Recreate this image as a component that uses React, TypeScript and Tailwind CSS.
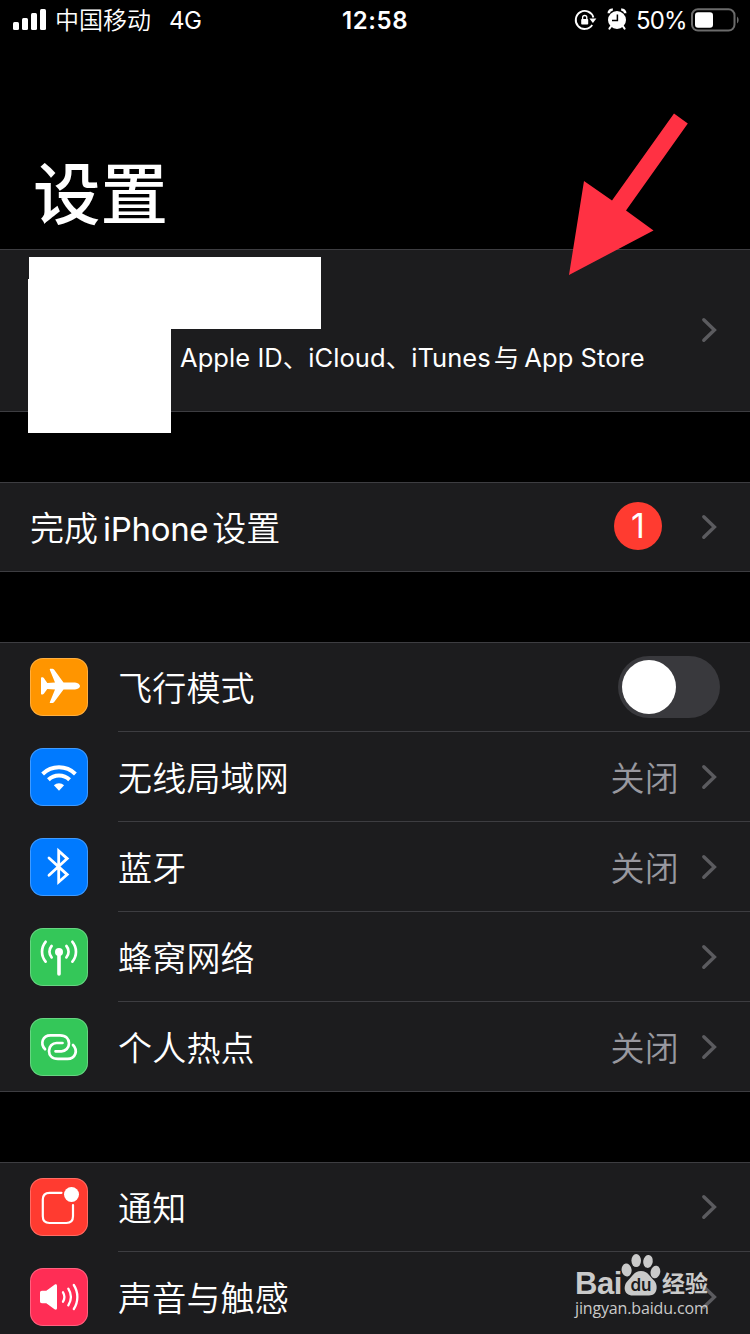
import React from 'react';

const Chevron = () => (
  <svg width="16" height="26" viewBox="0 0 16 26" fill="none" className="shrink-0">
    <path d="M2.8 2.8 L13.4 13 L2.8 23.2" stroke="#5b5b5f" strokeWidth="3.4" strokeLinecap="round" strokeLinejoin="miter" />
  </svg>
);

const StatusBar = () => (
  <header className="flex h-10 items-center text-white">
    <div className="flex w-[342px] items-center pl-[13px]">
      <svg width="34" height="22" viewBox="0 0 34 22" fill="#fff">
        <rect x="0" y="13" width="6" height="8" rx="1.5" />
        <rect x="9" y="9" width="6" height="12" rx="1.5" />
        <rect x="18" y="4" width="6" height="17" rx="1.5" />
        <rect x="27" y="0" width="6" height="21" rx="1.5" />
      </svg>
      <span className="ml-2 pt-0.5 text-[24px] leading-10 font-[350]">中国移动</span>
      <span className="ml-[18px] pt-0.5 text-[24px] leading-10 font-[390] tracking-[-0.4px]">4G</span>
    </div>
    <span className="w-[232px] pt-0.5 text-[24px] leading-10 font-semibold tracking-[0.6px]">12:58</span>
    <svg width="24" height="24" viewBox="0 0 24 24" fill="none" className="shrink-0">
      <path d="M18.2 17 A9 9 0 1 1 19.4 9.4" stroke="#fff" strokeWidth="1.9" />
      <path d="M15.4 10.4 H22.4 L18.9 15 Z" fill="#fff" />
      <rect x="7.2" y="11" width="7" height="5.6" rx="0.8" fill="#fff" />
      <path d="M8.6 11.4 V9.6 a2.1 2.1 0 0 1 4.2 0 V11.4" stroke="#fff" strokeWidth="1.3" />
    </svg>
    <svg width="22" height="24" viewBox="0 0 22 24" fill="none" className="ml-2 shrink-0">
      <circle cx="11" cy="12" r="9" fill="#fff" />
      <path d="M2.8 5.2 A3.4 3.4 0 0 1 6.8 1.8 M15.2 1.8 A3.4 3.4 0 0 1 19.2 5.2" stroke="#fff" strokeWidth="2.6" />
      <path d="M5 18.4 L3.4 20.6 M17 18.4 L18.6 20.6" stroke="#fff" strokeWidth="2" strokeLinecap="round" />
      <path d="M11.4 6.6 V12.6 H6" stroke="#000" strokeWidth="1.5" />
    </svg>
    <span className="ml-[8px] w-[55px] pt-0.5 text-[24px] leading-10 font-[380] tracking-[-0.9px]">50%</span>
    <svg width="50" height="24" viewBox="0 0 50 24" className="shrink-0">
      <rect x="1" y="1.2" width="42.5" height="21.4" rx="6" fill="none" stroke="#6b6b6b" strokeWidth="2" />
      <rect x="4" y="4.2" width="18" height="15.6" rx="3" fill="#fff" />
      <path d="M46 8.5 a4.5 4.5 0 0 1 0 7 Z" fill="#6b6b6b" />
    </svg>
  </header>
);

const PlaneIcon = () => (
  <svg width="58" height="58" viewBox="0 0 58 58" fill="#fff">
    <path d="M33.5 24.4 L45 24.4 C48 24.8 50 26.3 50 28 C50 29.7 48 31 45 31.4 L33.5 31.5 L24.2 44 C23.6 44.8 22.8 45 22 45 H20.4 C19.8 45 19.6 44.6 19.9 43.9 L25 31.5 L17.3 31 L14 35.4 C13.4 36.3 12.9 36.4 12 36.4 C11.3 36.4 11 36 11 35.4 V20.3 C11 19.6 11.4 19.3 12 19.3 C13 19.3 13.5 19.5 14 20.3 L17.3 24.9 L25 24.4 L19.9 12.1 C19.6 11.3 19.8 10.7 20.4 10.7 H22 C22.8 10.7 23.6 11 24.2 11.8 Z" />
  </svg>
);

const WifiIcon = () => (
  <svg width="58" height="58" viewBox="0 0 58 58" fill="none" stroke="#fff" strokeWidth="4">
    <path d="M12.6 26 A23.6 23.6 0 0 1 45.4 26" />
    <path d="M18.4 31.8 A15.4 15.4 0 0 1 39.6 31.8" />
    <path d="M29 42.8 L23.9 37.3 A7.4 7.4 0 0 1 34.1 37.3 Z" fill="#fff" stroke="none" />
  </svg>
);

const BluetoothIcon = () => (
  <svg width="58" height="58" viewBox="0 0 58 58" fill="none" stroke="#fff" strokeWidth="2.8" strokeLinecap="round" strokeLinejoin="miter">
    <path d="M19 20 L37.2 36.6 L28.7 44 V13 L37.2 20.6 L19 37.2" />
  </svg>
);

const CellularIcon = () => (
  <svg width="58" height="58" viewBox="0 0 58 58" fill="none" stroke="#fff" strokeWidth="2.7" strokeLinecap="round">
    <circle cx="29" cy="24" r="4" fill="#fff" stroke="none" />
    <path d="M29 25 V46" strokeWidth="3.6" />
    <path d="M21.6 18 A8.6 8.6 0 0 0 21.6 29.4 M36.4 18 A8.6 8.6 0 0 1 36.4 29.4" />
    <path d="M15.6 13.8 A15.5 15.5 0 0 0 15.6 33.6 M42.4 13.8 A15.5 15.5 0 0 1 42.4 33.6" />
  </svg>
);

const HotspotIcon = () => (
  <svg width="58" height="58" viewBox="0 0 58 58" fill="none" stroke="#fff" strokeWidth="2.7" strokeLinecap="round">
    <path d="M15 31.2 C9.8 25.5 12.6 17.3 20.5 17.3 H30 C36 17.3 39 21 39 25.3 C39 30 35.5 33.3 31.5 33.3 H25.5" />
    <path d="M43 27 C48.3 32.5 45.4 40.9 37.5 40.9 H28 C22 40.9 19 37.2 19 33 C19 28.2 22.5 25 26.5 25 H32.5" />
  </svg>
);

const NotificationIcon = () => (
  <svg width="58" height="58" viewBox="0 0 58 58" fill="none" stroke="#fff" strokeWidth="2.2" strokeLinecap="round">
    <path d="M31.5 14.8 H19.5 Q12.8 14.8 12.8 21.5 V38.3 Q12.8 45 19.5 45 H36.3 Q43 45 43 38.3 V27" />
    <circle cx="41.5" cy="16.5" r="7.5" fill="#fff" stroke="none" />
  </svg>
);

const SoundIcon = () => (
  <svg width="58" height="58" viewBox="0 0 58 58" fill="none" stroke="#fff" strokeWidth="2.3" strokeLinecap="round">
    <path d="M12 22.8 H16.3 L24.5 16.8 C26 15.8 27 16.4 27 18 V40 C27 41.6 26 42.2 24.5 41.2 L16.3 35.2 H12 C10.6 35.2 10 34.5 10 33.2 V24.8 C10 23.5 10.6 22.8 12 22.8 Z" fill="#fff" stroke="none" />
    <path d="M33 24.3 A9 9 0 0 1 33 33.7" />
    <path d="M38.3 20.7 A15.5 15.5 0 0 1 38.3 37.3" />
    <path d="M43.8 17 A22 22 0 0 1 43.8 41" />
  </svg>
);

type RowProps = {
  icon: React.ReactNode;
  color: string;
  label: string;
  value?: string;
  toggle?: boolean;
  last?: boolean;
};

const Row = ({ icon, color, label, value, toggle, last }: RowProps) => (
  <div className="flex h-[90px] pl-[30px]">
    <div className={`mt-4 h-[58px] w-[58px] shrink-0 overflow-hidden rounded-[13px] inset-ring inset-ring-white/25 ${color}`}>
      {icon}
    </div>
    <div className={`ml-[30px] flex flex-1 items-center ${last ? 'pb-px' : 'border-b border-[#3d3d41]'}`}>
      <span className="flex-1 pt-1 text-[34px] leading-[50px] font-[350] tracking-[0.2px] text-white">{label}</span>
      {value && <span className="mr-[22px] pt-1 text-[34px] leading-[50px] font-[350] tracking-[0.2px] text-[#98989f]">{value}</span>}
      {toggle ? (
        <div className="mr-[30px] h-[62px] w-[102px] rounded-full bg-[#39393d] p-1">
          <div className="h-[54px] w-[54px] rounded-full bg-white" />
        </div>
      ) : (
        <div className="mr-[33px] pt-px">
          <Chevron />
        </div>
      )}
    </div>
  </div>
);

// Section with hairlines drawn inside its own height
const Section = ({ className = '', children }: { className?: string; children: React.ReactNode }) => (
  <section className={`relative bg-[#1c1c1e] inset-shadow-[0_1px_0_#3d3d41,0_-1px_0_#3d3d41] ${className}`}>{children}</section>
);

const Watermark = () => (
  <div className="absolute top-[1252px] left-[575px] h-[66px] w-[140px] text-[#cacaca]">
    <div className="flex h-[44px] items-end">
      <span className="w-[46px] font-['Liberation_Sans',sans-serif] text-[31px] leading-[24px] font-bold tracking-[-0.4px]">Bai</span>
      <svg width="40" height="44" viewBox="0 0 40 44" fill="currentColor" className="shrink-0">
        <ellipse cx="5.6" cy="18" rx="5" ry="6.5" transform="rotate(-8 5.6 18)" />
        <ellipse cx="15.2" cy="8.6" rx="4.8" ry="6.5" />
        <ellipse cx="27" cy="9.4" rx="4.8" ry="6.5" transform="rotate(8 27 9.4)" />
        <ellipse cx="34.4" cy="20" rx="4.8" ry="6.3" transform="rotate(12 34.4 20)" />
        <path d="M20 19 C27 19 29 25 33 28.5 C37 32 37.5 43.5 28 43.5 H12 C2 43.5 2 33 7 28.5 C11 25 13 19 20 19 Z" />
        <text x="20" y="39" fontSize="17" fontWeight="600" textAnchor="middle" fill="#1c1c1e">du</text>
      </svg>
      <span className="ml-px text-[23px] leading-[24px] font-bold whitespace-nowrap">经验</span>
    </div>
    <div className="pt-0.5 font-['Open_Sans','Noto_Sans',sans-serif] text-[16px] leading-[20px] font-medium tracking-[-0.15px] whitespace-nowrap">jingyan.baidu.com</div>
  </div>
);

const App = () => {
  return (
    <main className="relative h-[1334px] w-[750px] overflow-hidden bg-black font-['Inter','Noto_Sans_CJK_SC',sans-serif]">
      <StatusBar />
      <h1 className="mt-[105px] h-[104px] pl-[33px] text-[67.5px] leading-[100px] font-medium text-white">设置</h1>

      <Section className="flex h-[163px] items-center pr-[33px]">
        <p className="flex-1 pt-[55px] pl-[180px] text-[25.5px] leading-9 font-[390] tracking-[0.06px] whitespace-nowrap text-white">
          Apple ID、iCloud、iTunes
          <span className="mr-[5px] ml-[3px]">与</span>
          App Store
        </p>
        <div className="pb-0.5">
          <Chevron />
        </div>
        <div className="absolute top-2 left-[29px] h-[72px] w-[292px] bg-white" />
        <div className="absolute top-[30px] left-[28px] h-[154px] w-[143px] bg-white" />
      </Section>

      <Section className="mt-[70px] flex h-[90px] items-center pr-[33px] pl-[30px]">
        <span className="flex-1 pt-1 text-[34px] leading-[50px] font-[350] text-white">
          完成<span className="mr-1 ml-[5px] text-[33px] font-[390] tracking-[-0.3px]">iPhone</span>设置
        </span>
        <span className="mr-[39px] mb-0.5 h-12 w-12 rounded-full bg-[#ff3b30] text-center text-[34px] leading-12 text-white">1</span>
        <Chevron />
      </Section>

      <Section className="mt-[70px]">
        <Row icon={<PlaneIcon />} color="bg-[#ff9500]" label="飞行模式" toggle />
        <Row icon={<WifiIcon />} color="bg-[#007aff]" label="无线局域网" value="关闭" />
        <Row icon={<BluetoothIcon />} color="bg-[#007aff]" label="蓝牙" value="关闭" />
        <Row icon={<CellularIcon />} color="bg-[#34c759]" label="蜂窝网络" />
        <Row icon={<HotspotIcon />} color="bg-[#34c759]" label="个人热点" value="关闭" last />
      </Section>

      <Section className="mt-[70px]">
        <Row icon={<NotificationIcon />} color="bg-[#ff3b30]" label="通知" />
        <Row icon={<SoundIcon />} color="bg-[#ff2d55]" label="声音与触感" last />
      </Section>

      <svg className="absolute top-[110px] left-[565px]" width="130" height="170" viewBox="565 110 130 170">
        <polygon points="674,113.5 687.8,123.5 626,210.5 653.5,230.5 569,275 584,181 612,200.5" fill="#ff3143" />
      </svg>
      <Watermark />
    </main>
  );
};

export default App;
